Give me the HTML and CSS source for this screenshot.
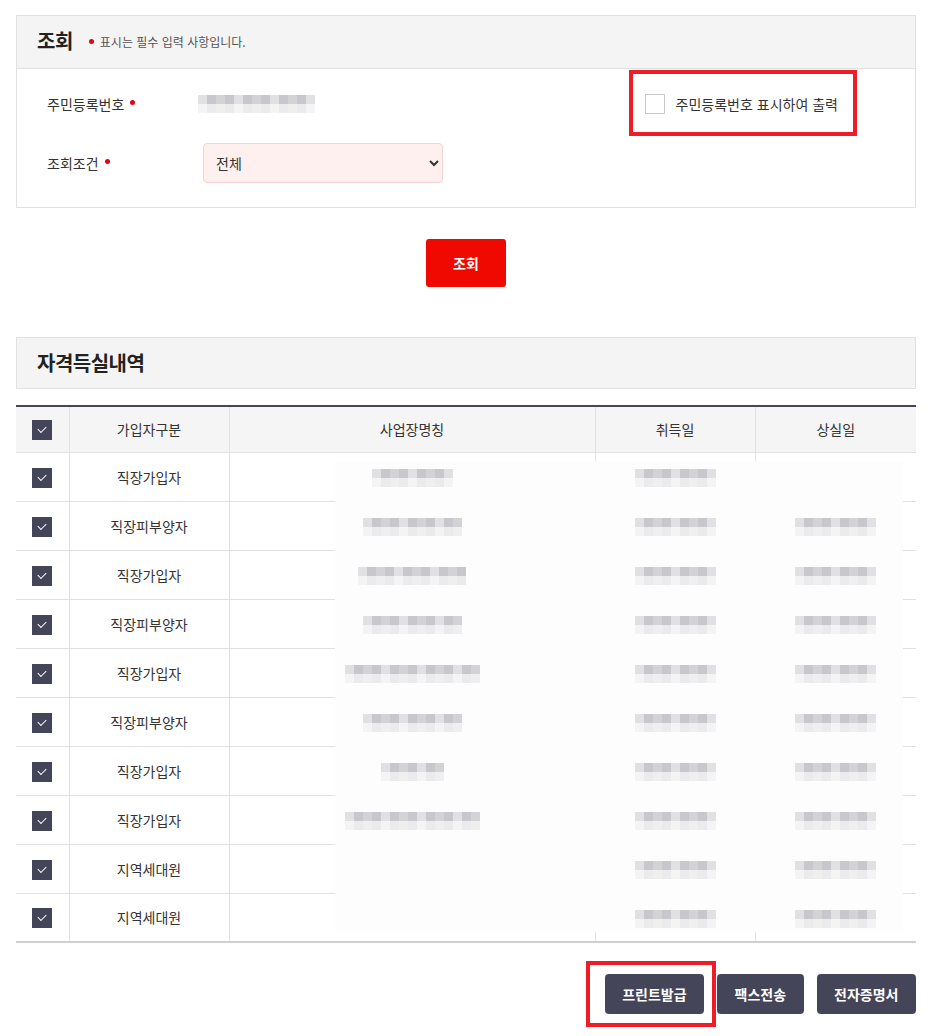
FILE: index.html
```html
<!DOCTYPE html>
<html lang="ko">
<head>
<meta charset="utf-8">
<title>자격득실내역 조회</title>
<link rel="stylesheet" href="styles.css">
</head>
<body>
<div class="page">
  <section class="panel">
    <div class="panel-head">
      <h2 class="panel-title">조회</h2>
      <span class="req-note"><i class="dot"></i>표시는 필수 입력 사항입니다.</span>
    </div>
    <div class="panel-body">
      <div class="form-row">
        <label class="form-label">주민등록번호<i class="dot"></i></label>
        <span class="blur blur-id"></span>
        <label class="check-opt">
          <span class="check-box"></span>
          <span>주민등록번호 표시하여 출력</span>
        </label>
      </div>
      <div class="form-row">
        <label class="form-label">조회조건<i class="dot"></i></label>
        <select class="form-select">
          <option>전체</option>
        </select>
      </div>
    </div>
  </section>

  <div class="search-wrap">
    <button class="btn-search" type="button">조회</button>
  </div>

  <section class="section-head">
    <h2 class="section-title">자격득실내역</h2>
  </section>

  <div class="table-wrap">
    <table class="grid">
      <colgroup>
        <col class="c1"><col class="c2"><col class="c3"><col class="c4"><col class="c5">
      </colgroup>
      <thead>
        <tr>
          <th><span class="tick"></span></th>
          <th>가입자구분</th>
          <th>사업장명칭</th>
          <th>취득일</th>
          <th>상실일</th>
        </tr>
      </thead>
      <tbody>
        <tr><td><span class="tick"></span></td><td>직장가입자</td><td><span class="blur" style="width:81px"></span></td><td><span class="blur" style="width:81px"></span></td><td></td></tr>
        <tr><td><span class="tick"></span></td><td>직장피부양자</td><td><span class="blur" style="width:99px"></span></td><td><span class="blur" style="width:81px"></span></td><td><span class="blur" style="width:81px"></span></td></tr>
        <tr><td><span class="tick"></span></td><td>직장가입자</td><td><span class="blur" style="width:108px"></span></td><td><span class="blur" style="width:81px"></span></td><td><span class="blur" style="width:81px"></span></td></tr>
        <tr><td><span class="tick"></span></td><td>직장피부양자</td><td><span class="blur" style="width:99px"></span></td><td><span class="blur" style="width:81px"></span></td><td><span class="blur" style="width:81px"></span></td></tr>
        <tr><td><span class="tick"></span></td><td>직장가입자</td><td><span class="blur" style="width:135px"></span></td><td><span class="blur" style="width:81px"></span></td><td><span class="blur" style="width:81px"></span></td></tr>
        <tr><td><span class="tick"></span></td><td>직장피부양자</td><td><span class="blur" style="width:99px"></span></td><td><span class="blur" style="width:81px"></span></td><td><span class="blur" style="width:81px"></span></td></tr>
        <tr><td><span class="tick"></span></td><td>직장가입자</td><td><span class="blur" style="width:63px"></span></td><td><span class="blur" style="width:81px"></span></td><td><span class="blur" style="width:81px"></span></td></tr>
        <tr><td><span class="tick"></span></td><td>직장가입자</td><td><span class="blur" style="width:135px"></span></td><td><span class="blur" style="width:81px"></span></td><td><span class="blur" style="width:81px"></span></td></tr>
        <tr><td><span class="tick"></span></td><td>지역세대원</td><td></td><td><span class="blur" style="width:81px"></span></td><td><span class="blur" style="width:81px"></span></td></tr>
        <tr><td><span class="tick"></span></td><td>지역세대원</td><td></td><td><span class="blur" style="width:81px"></span></td><td><span class="blur" style="width:81px"></span></td></tr>
      </tbody>
    </table>
    <div class="mosaic-veil"></div>
  </div>

  <div class="actions">
    <button class="btn-dark marked" type="button">프린트발급</button>
    <button class="btn-dark" type="button">팩스전송</button>
    <button class="btn-dark" type="button">전자증명서</button>
  </div>
</div>
</body>
</html>
```

FILE: styles.css
```css
* { box-sizing: border-box; }
html, body { margin: 0; padding: 0; background: #fff; }
body {
  font-family: "Noto Sans CJK KR", "Noto Sans", sans-serif;
  color: #333;
  font-size: 14px;
}
.page { padding: 15px 16px 30px 16px; width: 932px; }

.dot {
  display: inline-block;
  width: 5px; height: 5px;
  border-radius: 50%;
  background: #e60012;
  vertical-align: middle;
  position: relative; top: -2px;
}

/* top panel */
.panel { border: 1px solid #e1e1e1; }
.panel-head {
  height: 53px;
  background: #f4f4f4;
  border-bottom: 1px solid #e1e1e1;
  display: flex;
  align-items: center;
  padding-left: 20px;
  padding-bottom: 4px;
  gap: 16px;
}
.panel-title { margin: 0; font-size: 20px; font-weight: 700; color: #222; letter-spacing: -0.5px; }
.req-note { font-size: 12px; color: #555; display: flex; align-items: center; gap: 6px; padding-top: 3px; }
.req-note .dot { top: 0; }

.panel-body { padding: 15px 30px 24px 30px; display: flex; flex-direction: column; gap: 19px; }
.form-row { display: flex; align-items: center; height: 40px; }
.form-label { width: 156px; flex: none; display: flex; align-items: center; gap: 6px; color: #333; }
.blur-id { width: 117px; margin-left: -5px; }
.check-opt {
  margin-left: auto;
  margin-right: 47px;
  display: flex; align-items: center; gap: 11px;
  position: relative;
  color: #333;
}
.check-opt::after {
  content: "";
  position: absolute;
  left: -16px; right: -19px; top: -24px; bottom: -22px;
  border: 4px solid #ee1c25;
}
.check-box { width: 20px; height: 20px; border: 1px solid #c9c9c9; background: #fff; flex: none; }

.form-select {
  width: 240px; height: 40px;
  border: 1px solid #f6d3d3;
  border-radius: 4px;
  background: #fff0f0;
  font-family: inherit;
  font-size: 14px;
  color: #333;
  padding: 0 8px;
}

.search-wrap { display: flex; justify-content: center; padding-top: 31px; }
.btn-search {
  width: 80px; height: 48px;
  background: #ef0900;
  border: 0; border-radius: 3px;
  color: #fff; font-family: inherit; font-size: 14px; font-weight: 700;
}

.section-head {
  margin-top: 50px;
  height: 52px;
  background: #f4f4f4;
  border: 1px solid #e1e1e1;
  display: flex; align-items: center;
  padding-left: 20px;
  padding-bottom: 2px;
}
.section-title { margin: 0; font-size: 20px; font-weight: 700; color: #222; letter-spacing: -0.5px; }

/* table */
.table-wrap { position: relative; margin-top: 16px; }
.grid {
  width: 900px;
  border-collapse: collapse;
  table-layout: fixed;
  border-top: 2px solid #454559;
  border-bottom: 2px solid #cfcfd4;
}
.c1 { width: 53px; } .c2 { width: 160px; } .c3 { width: 366px; } .c4 { width: 160px; } .c5 { width: 161px; }
.grid th, .grid td {
  border-left: 1px solid #e1e1e1;
  border-bottom: 1px solid #e1e1e1;
  text-align: center;
  vertical-align: middle;
  padding: 0;
  color: #333;
  font-weight: 400;
  font-size: 14px;
}
.grid th:first-child, .grid td:first-child { border-left: 0; }
.grid th { height: 46px; background: #f5f5f5; }
.grid td { height: 49px; }
.grid tbody tr:last-child td { border-bottom: 0; }

.tick {
  display: inline-block;
  width: 20px; height: 20px;
  background: #454559;
  position: relative;
  vertical-align: middle;
}
.tick::after {
  content: "";
  position: absolute;
  top: 6px; left: 6px;
  width: 7px; height: 4px;
  border-left: 1.5px solid #fff;
  border-bottom: 1.5px solid #fff;
  transform: rotate(-45deg);
  transform-origin: center;
}

.blur {
  display: inline-block;
  height: 18px;
  vertical-align: middle;
  position: relative; z-index: 2;
  background:
    repeating-linear-gradient(90deg, rgba(255,255,255,.45) 0 9px, rgba(255,255,255,0) 9px 18px, rgba(255,255,255,.2) 18px 27px, rgba(255,255,255,0) 27px 36px),
    linear-gradient(#c8c8cc 0 50%, #ebebed 50% 100%);
}

.mosaic-veil {
  position: absolute;
  left: 319px; top: 56px;
  width: 568px; height: 471px;
  background: #fdfdfd;
  z-index: 1;
}

.actions {
  display: flex; justify-content: flex-end;
  gap: 13px;
  margin-top: 31px;
}
.btn-dark {
  height: 40px;
  padding: 0 17.5px;
  background: #454559;
  border: 0; border-radius: 4px;
  color: #fff; font-family: inherit; font-size: 14px; font-weight: 700;
  position: relative;
}
.btn-dark.marked::after {
  content: "";
  position: absolute;
  left: -19px; right: -12px; top: -13px; bottom: -13px;
  border: 4px solid #ee1c25;
}
```
